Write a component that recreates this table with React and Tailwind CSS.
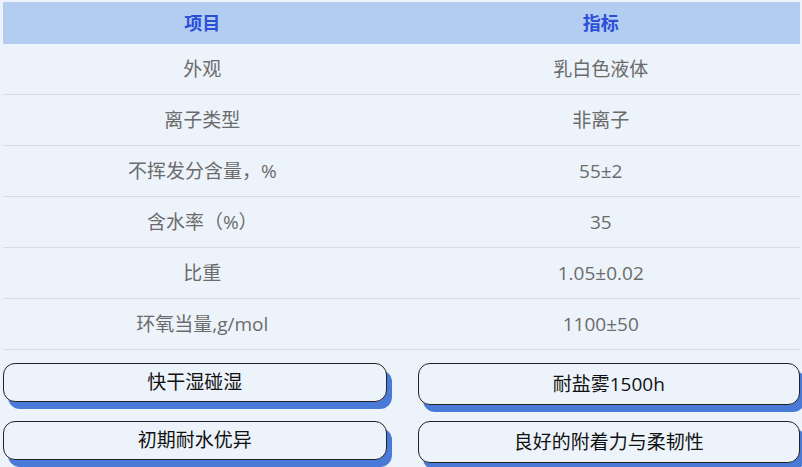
import React from 'react';

const rows = [
  ['外观', '乳白色液体'],
  ['离子类型', '非离子'],
  ['不挥发分含量，%', '55±2'],
  ['含水率（%）', '35'],
  ['比重', '1.05±0.02'],
  ['环氧当量,g/mol', '1100±50'],
];

const features = [
  ['快干湿碰湿', '耐盐雾1500h'],
  ['初期耐水优异', '良好的附着力与柔韧性'],
];

export default function App() {
  return (
    <div
      className="w-[802px] h-[467px] bg-[#edf3fa] pt-[2px] pl-[3px] pr-[2px] overflow-hidden"
      style={{ fontFamily: '"Open Sans", "Noto Sans CJK SC", sans-serif' }}
    >
      {/* spec table */}
      <div className="w-[797px]">
        <div className="grid grid-cols-2 h-[42px] bg-[#b3cdf0] items-center text-center text-[18px] font-bold text-[#2b4fd8]">
          <div>项目</div>
          <div>指标</div>
        </div>
        {rows.map(([k, v]) => (
          <div
            key={k}
            className="grid grid-cols-2 h-[51px] items-center text-center text-[19px] text-[#6b6b6b] border-b border-[#d9dde3]"
          >
            <div>{k}</div>
            <div>{v}</div>
          </div>
        ))}
      </div>

      {/* feature tags */}
      <div className="w-[797px] mt-[13px] flex flex-col gap-[16px]">
        {features.map(([a, b], i) => (
          <div key={i} className="grid grid-cols-2">
            <div className="pr-[15px]">
              <div className="h-[39px] rounded-[12px] border border-[#222] bg-[#edf3fa] shadow-[5px_7px_0_#4a7ad8] flex items-center justify-center text-[19px] text-[#111]">
                {a}
              </div>
            </div>
            <div className="pl-[16px]">
              <div className="h-[42px] rounded-[12px] border border-[#222] bg-[#edf3fa] shadow-[5px_7px_0_#4a7ad8] flex items-center justify-center text-[19px] text-[#111]">
                {b}
              </div>
            </div>
          </div>
        ))}
      </div>
    </div>
  );
}
